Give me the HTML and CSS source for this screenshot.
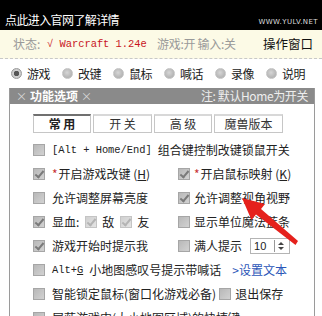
FILE: index.html
```html
<!DOCTYPE html>
<html lang="zh">
<head>
<meta charset="utf-8">
<link rel="stylesheet" href="styles.css">
</head>
<body>
<div class="top">
  <span class="top-link">点此进入官网了解详情</span>
  <span class="site">WWW.YULV.NET</span>
</div>
<div class="status">
  <span class="lbl">状态:</span>
  <span class="ver">√ Warcraft 1.24e</span>
  <span class="state">游戏:开 输入:关</span>
  <span class="win">操作窗口</span>
</div>
<div class="modes">
  <span class="mode"><span class="radio on"></span>游戏</span>
  <span class="mode"><span class="radio"></span>改键</span>
  <span class="mode"><span class="radio"></span>鼠标</span>
  <span class="mode"><span class="radio"></span>喊话</span>
  <span class="mode"><span class="radio"></span>录像</span>
  <span class="mode"><span class="radio"></span>说明</span>
</div>
<div class="panel">
  <div class="panel-head">
    <span class="title"><span class="x">×</span>功能选项<span class="x">×</span></span>
    <span class="note">注: 默认Home为开关</span>
  </div>
  <div class="tabs">
    <span class="tab active t1">常 用</span>
    <span class="tab t2">开 关</span>
    <span class="tab t3">高 级</span>
    <span class="tab t4">魔兽版本</span>
  </div>
  <div class="rows">
    <div class="row wide"><span class="cb"></span><span class="mono">[Alt + Home/End]</span><span class="sp">组合键控制改键锁鼠开关</span></div>

    <div class="row"><span class="cb checked"></span><span class="star">*</span>开启游戏改键 (<u>H</u>)</div>
    <div class="row right"><span class="cb checked"></span><span class="star">*</span>开启鼠标映射 (<u>K</u>)</div>

    <div class="row"><span class="cb"></span>允许调整屏幕亮度</div>
    <div class="row right"><span class="cb checked"></span>允许调整视角视野</div>

    <div class="row"><span class="cb checked"></span>显血:<span class="cb checked pale sub"></span>敌<span class="cb checked pale sub"></span>友</div>
    <div class="row right"><span class="cb"></span>显示单位魔法蓝条</div>

    <div class="row"><span class="cb checked"></span>游戏开始时提示我</div>
    <div class="row right"><span class="cb"></span>满人提示<span class="spin"><span class="spin-val">10</span><span class="spin-btn"><span class="up"></span><span class="down"></span></span></span></div>

    <div class="row wide"><span class="cb"></span><span class="mono">Alt+<u>G</u></span><span class="sp">小地图感叹号提示带喊话</span><span class="link">&gt;设置文本</span></div>

    <div class="row wide"><span class="cb"></span>智能锁定鼠标(窗口化游戏必备)<span class="cb sub2"></span>退出保存</div>

    <div class="row wide"><span class="cb"></span>屏蔽游戏中(大小地图区域)的快捷键</div>
  </div>
</div>
<svg class="arrow" width="322" height="316" viewBox="0 0 322 316">
  <polygon points="242,198 265,204 261,209 298,241 295.5,245 256,214.5 251.5,220" fill="#e5211c"/>
</svg>
</body>
</html>
```
FILE: styles.css
```css
html, body {
  margin: 0;
  padding: 0;
}
body {
  width: 322px;
  height: 316px;
  overflow: hidden;
  position: relative;
  background: #fff;
  font-family: "Noto Sans CJK SC", "Noto Sans", sans-serif;
  font-size: 12px;
  line-height: 16px;
  color: #222;
}

.top {
  height: 30px;
  background: #000;
  display: flex;
  align-items: flex-end;
  justify-content: space-between;
  padding: 0 4px 2px 5px;
  box-sizing: border-box;
}
.top-link {
  color: #fff;
  font-size: 12px;
  letter-spacing: -0.6px;
}
.site {
  color: #ddd;
  font-family: "DejaVu Sans", sans-serif;
  font-size: 7px;
  line-height: 10px;
  letter-spacing: 0.4px;
  margin-bottom: 1px;
}

.status {
  height: 28px;
  background: #fcfae6;
  border-bottom: 1px dashed #c8c8c8;
  display: flex;
  align-items: center;
  padding-left: 13px;
  box-sizing: content-box;
}
.lbl {
  color: #999;
  width: 34px;
}
.ver {
  color: #c8141e;
  font-family: "Liberation Mono", monospace;
  font-size: 10.4px;
  width: 110px;
  white-space: pre;
}
.state {
  color: #999;
  width: 106px;
  letter-spacing: -0.3px;
}
.win {
  color: #111;
  font-size: 12.5px;
}

.modes {
  height: 29px;
  display: flex;
  align-items: center;
  padding-left: 11px;
  gap: 12px;
}
.mode {
  display: flex;
  align-items: center;
  gap: 5px;
  letter-spacing: -0.5px;
}
.radio {
  width: 11px;
  height: 11px;
  border-radius: 50%;
  box-sizing: border-box;
  background: radial-gradient(circle at 45% 40%, #d6d6d6 0, #b4b4b4 70%);
  border: 1px solid #c4c4c4;
}
.radio.on {
  background: radial-gradient(circle, #555 0, #555 2.5px, #d0d0d0 3px, #c0c0c0 100%);
  border-color: #999;
}

.panel {
  margin-left: 9px;
  width: 306px;
  height: 240px;
  border-left: 1px solid #9a9a9a;
  border-right: 1px solid #9a9a9a;
  box-sizing: border-box;
}
.panel-head {
  height: 16px;
  background: #8a8a8a;
  display: flex;
  align-items: center;
  justify-content: space-between;
  padding: 0 6px 0 6px;
  color: #fff;
}
.title {
  font-weight: bold;
  display: flex;
  gap: 3px;
  align-items: center;
}
.title .x {
  font-weight: normal;
  color: #d8d8d8;
  font-size: 11px;
}
.note {
  color: #eee;
  letter-spacing: -0.4px;
}

.tabs {
  display: flex;
  gap: 2px;
  margin: 10px 0 0 23px;
}
.tab {
  height: 19px;
  box-sizing: border-box;
  border: 1px solid #c6c6c6;
  border-top: 2px solid #d8d8d8;
  display: flex;
  align-items: center;
  justify-content: center;
  color: #333;
  background: #fff;
}
.tab.active {
  border-top: 2px solid #707070;
  font-weight: bold;
  color: #222;
}
.t1 { width: 58px; }
.t2 { width: 59px; }
.t3 { width: 58px; }
.t4 { width: 69px; }

.rows {
  display: grid;
  grid-template-columns: 145px 1fr;
  grid-auto-rows: 24px;
  margin: 5px 0 0 23px;
}
.row {
  display: flex;
  align-items: center;
  white-space: nowrap;
}
.row.wide {
  grid-column: 1 / 3;
}
.cb {
  width: 12px;
  height: 12px;
  box-sizing: border-box;
  border: 1px solid #a6a6a6;
  background: linear-gradient(135deg, #b8b8b8, #d2d2d2);
  margin-right: 7px;
  flex: none;
  position: relative;
}
.row.right .cb {
  margin-right: 4px;
}
.cb.checked::after {
  content: "";
  position: absolute;
  left: 3px;
  top: 0px;
  width: 3px;
  height: 7px;
  border-right: 2px solid #7a7a7a;
  border-bottom: 2px solid #7a7a7a;
  transform: rotate(40deg);
}
.cb.pale {
  background: linear-gradient(135deg, #d0d0d0, #e4e4e4);
  border-color: #c4c4c4;
}
.cb.pale::after {
  border-color: #b4b4b4;
}
.cb.sub {
  margin-left: 6px;
  margin-right: 5px;
}
.row.right .cb.sub {
  margin-right: 4px;
}
.cb.sub2 {
  margin-left: 3px;
  margin-right: 4px;
}
.star {
  color: #c83232;
  margin-right: 1px;
}
.mono {
  font-family: "Liberation Mono", monospace;
  font-size: 10.4px;
}
.sp {
  margin-left: 6px;
}
.link {
  color: #2b56b8;
  margin-left: 11px;
}

.spin {
  display: flex;
  align-items: center;
  margin-left: 8px;
  width: 40px;
  height: 16px;
  border: 1px solid #b4b4b4;
  box-sizing: border-box;
  font-size: 11px;
}
.spin-val {
  flex: 1;
  padding-left: 3px;
  font-family: "Liberation Sans", sans-serif;
}
.spin-btn {
  width: 12px;
  height: 12px;
  border-left: 1px solid #999;
  display: flex;
  flex-direction: column;
  align-items: center;
  justify-content: center;
  gap: 2px;
  margin-right: 2px;
}
.up {
  width: 0;
  height: 0;
  border-left: 3px solid transparent;
  border-right: 3px solid transparent;
  border-bottom: 3px solid #444;
}
.down {
  width: 0;
  height: 0;
  border-left: 3px solid transparent;
  border-right: 3px solid transparent;
  border-top: 3px solid #444;
}

.arrow {
  position: absolute;
  left: 0;
  top: 0;
  pointer-events: none;
}
```
